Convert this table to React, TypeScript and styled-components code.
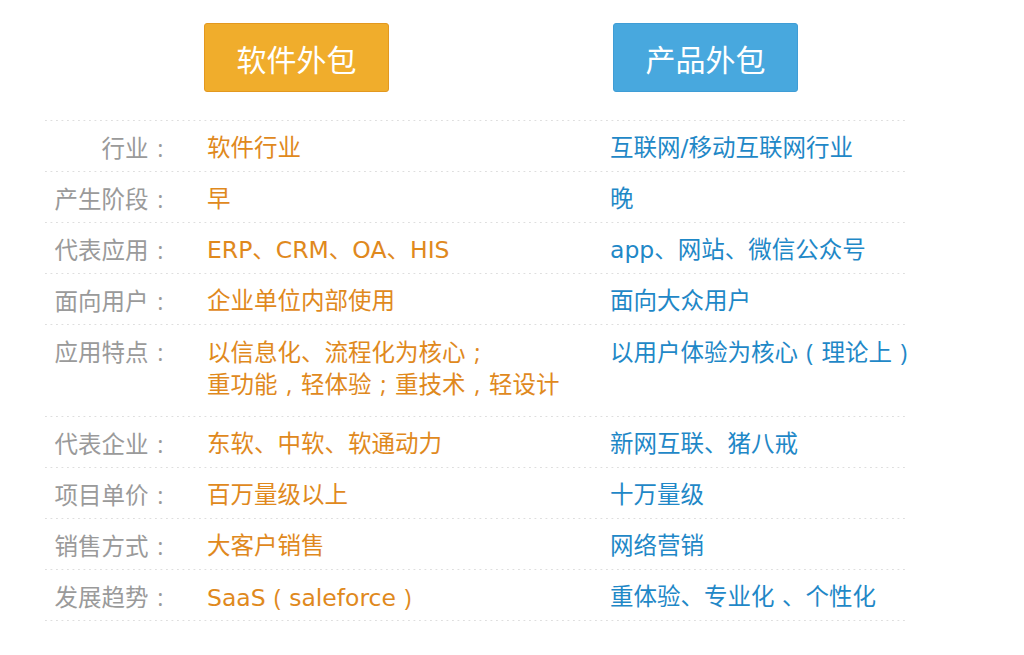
import React from "react";
import styled, { createGlobalStyle } from "styled-components";

const GlobalStyle = createGlobalStyle`
  body {
    margin: 0;
    background: #fff;
    font-family: "DejaVu Sans", "Noto Sans CJK SC", sans-serif;
  }
`;

const rows = [
  { label: "行业：", soft: ["软件行业"], prod: ["互联网/移动互联网行业"] },
  { label: "产生阶段：", soft: ["早"], prod: ["晚"] },
  { label: "代表应用：", soft: ["ERP、CRM、OA、HIS"], prod: ["app、网站、微信公众号"] },
  { label: "面向用户：", soft: ["企业单位内部使用"], prod: ["面向大众用户"] },
  {
    label: "应用特点：",
    soft: ["以信息化、流程化为核心；", "重功能，轻体验；重技术，轻设计"],
    prod: ["以用户体验为核心（理论上）"],
  },
  { label: "代表企业：", soft: ["东软、中软、软通动力"], prod: ["新网互联、猪八戒"] },
  { label: "项目单价：", soft: ["百万量级以上"], prod: ["十万量级"] },
  { label: "销售方式：", soft: ["大客户销售"], prod: ["网络营销"] },
  { label: "发展趋势：", soft: ["SaaS（saleforce）"], prod: ["重体验、专业化 、个性化"] },
];

// full-width punctuation is drawn centred in its em box, as in the original
const centred: Record<string, string> = { "：": ":", "；": ";", "，": ",", "（": "(", "）": ")" };

const renderText = (s: string) => {
  const out: React.ReactNode[] = [];
  let buf = "";
  Array.from(s).forEach((ch, i) => {
    if (centred[ch]) {
      if (buf) out.push(buf);
      buf = "";
      out.push(<Punct key={i}>{centred[ch]}</Punct>);
    } else {
      buf += ch;
    }
  });
  if (buf) out.push(buf);
  return out;
};

const App: React.FC = () => {
  return (
    <>
      <GlobalStyle />
      <Page>
        <Header>
          <span />
          <TypeButton tone="orange">软件外包</TypeButton>
          <TypeButton tone="blue">产品外包</TypeButton>
        </Header>
        <Table>
          {rows.map((r) => (
            <Row key={r.label} tall={r.soft.length > 1}>
              <Label>{renderText(r.label)}</Label>
              <Value tone="orange">
                {r.soft.map((t) => (
                  <div key={t}>{renderText(t)}</div>
                ))}
              </Value>
              <Value tone="blue">
                {r.prod.map((t) => (
                  <div key={t}>{renderText(t)}</div>
                ))}
              </Value>
            </Row>
          ))}
        </Table>
      </Page>
    </>
  );
};

const Page = styled.div`
  width: 863px;
  margin-left: 45px;
  padding-top: 23px;
`;

const Header = styled.div`
  display: grid;
  grid-template-columns: 159px 409px 1fr;
  padding-bottom: 28px;
`;

const TypeButton = styled.div<{ tone: "orange" | "blue" }>`
  box-sizing: border-box;
  width: 185px;
  height: 69px;
  display: flex;
  align-items: center;
  justify-content: center;
  border-radius: 3px;
  font-family: "Noto Sans CJK SC", sans-serif;
  font-size: 30px;
  color: #fff;
  background: ${(p) => (p.tone === "orange" ? "#f0ad2c" : "#48a8de")};
  border: 1px solid ${(p) => (p.tone === "orange" ? "#e3981f" : "#3f9dd6")};
`;

const Table = styled.div`
  background-image: linear-gradient(to right, #dedede 2px, transparent 2px);
  background-size: 5.5px 1px;
  background-repeat: repeat-x;
  background-position: left bottom;
  padding-bottom: 1px;
`;

const Row = styled.div<{ tall?: boolean }>`
  display: grid;
  grid-template-columns: 162px 403px 1fr;
  padding-top: 13px;
  padding-bottom: ${(p) => (p.tall ? "15px" : "6px")};
  background-image: linear-gradient(to right, #dedede 2px, transparent 2px);
  background-size: 5.5px 1px;
  background-repeat: repeat-x;
  background-position: left top;
  font-size: 23.5px;
  line-height: 31px;
`;

const Punct = styled.span`
  display: inline-block;
  width: 1em;
  text-align: center;
  font-family: "Open Sans", sans-serif;
`;

const Label = styled.div`
  color: #9a9a9a;
  text-align: right;
  padding-right: 35px;
  white-space: nowrap;
`;

const Value = styled.div<{ tone: "orange" | "blue" }>`
  color: ${(p) => (p.tone === "orange" ? "#e0891d" : "#1f88c7")};
  white-space: nowrap;
`;

export default App;
